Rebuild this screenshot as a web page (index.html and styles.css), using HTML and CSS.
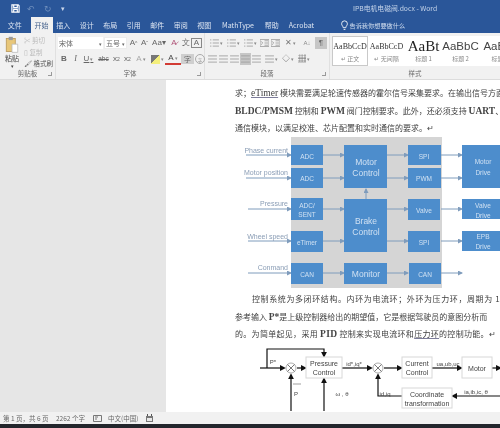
FILE: index.html
```html
<!DOCTYPE html>
<html lang="zh">
<head>
<meta charset="utf-8">
<title>IPB电机电磁阀.docx - Word</title>
<link rel="stylesheet" href="styles.css">
</head>
<body>
<svg class="defs" width="0" height="0">
  <symbol id="lines" viewBox="0 0 10 9"><path d="M0 1h10M0 4.500h10M0 8h10" stroke="currentColor" fill="none"/></symbol>
  <symbol id="list" viewBox="0 0 10 9"><path d="M3 1h7M3 4.500h7M3 8h7M0 1h1.500M0 4.500h1.500M0 8h1.500" stroke="currentColor" fill="none"/></symbol>
  <symbol id="indent" viewBox="0 0 10 9"><path d="M0 .5h10v8H0zM5 2h4M5 4.500h4M5 7h4M1 2.500l2 2-2 2" stroke="currentColor" fill="none"/></symbol>
</svg>
<div class="app">
  <header class="titlebar">
    <div class="quick">
      <svg class="save" viewBox="0 0 10 10"><path d="M1 1h7l1 1v7H1zM3 1v3h4V1M3 9V6h4v3" fill="none" stroke="currentColor" stroke-width="1.300"/></svg>
      <span class="dim">↶</span><span class="dim">↻</span><span class="drop">▾</span>
    </div>
    <div class="doc-title">IPB电机电磁阀.docx - Word</div>
  </header>
  <nav class="tabs">
    <span class="tab">文件</span>
    <span class="tab active">开始</span>
    <span class="tab">插入</span>
    <span class="tab">设计</span>
    <span class="tab">布局</span>
    <span class="tab">引用</span>
    <span class="tab">邮件</span>
    <span class="tab">审阅</span>
    <span class="tab">视图</span>
    <span class="tab wide">MathType</span>
    <span class="tab">帮助</span>
    <span class="tab mid">Acrobat</span>
    <span class="tell">
      <svg class="bulb" viewBox="0 0 8 11"><path d="M2.500 8C2.300 6 .7 5.500.7 3.500a3.300 3.300 0 0 1 6.600 0C7.300 5.500 5.700 6 5.500 8zM3 10h2" fill="none" stroke="currentColor"/></svg>
      告诉我你想要做什么
    </span>
  </nav>
  <section class="ribbon">
    <div class="group clip">
      <div class="group-body clip-body">
        <div class="paste">
          <svg class="paste-icon" viewBox="0 0 16 22"><rect x="1" y="3" width="11" height="16" fill="#e8c77a" stroke="#b9975a"/><rect x="4" y="1" width="5" height="4" fill="#9a9a9a"/><path d="M8 10h7v10H8z" fill="#fff" stroke="#bbb"/></svg>
          <span>粘贴</span><span class="caret">▾</span>
        </div>
        <div class="clip-list">
          <span class="off">✂ 剪切</span>
          <span class="off">▯ 复制</span>
          <span>🖌 格式刷</span>
        </div>
      </div>
      <div class="group-label">剪贴板<i class="launch"></i></div>
    </div>
    <div class="group font">
      <div class="group-body stack">
        <div class="row">
          <span class="select s-font">宋体<b>▾</b></span>
          <span class="select s-size">五号<b>▾</b></span>
          <span class="ic w11">A<sup>^</sup></span>
          <span class="ic w11">A<sup>ˇ</sup></span>
          <span class="ic w18">Aa▾</span>
          <span class="ic w12 rose">A̷</span>
          <span class="ic w11">文</span>
          <span class="ic w11 boxed">A</span>
        </div>
        <div class="row serif">
          <span class="ic w12 bold">B</span>
          <span class="ic w11 ital">I</span>
          <span class="ic w15 under">U<small>▾</small></span>
          <span class="ic w15 strike">abc</span>
          <span class="ic w11">x<sub>2</sub></span>
          <span class="ic w11">x<sup>2</sup></span>
          <span class="ic w16 pale">A<small>▾</small></span>
          <span class="ic w16"><i class="hl"></i><small>▾</small></span>
          <span class="ic w16 red-a">A<small>▾</small></span>
          <span class="ic w13 shade">字</span>
          <span class="ic w11 circ">字</span>
        </div>
      </div>
      <div class="group-label">字体<i class="launch"></i></div>
    </div>
    <div class="group para">
      <div class="group-body stack">
        <div class="row">
          <span class="ic w18"><svg class="glyph"><use href="#list"/></svg><small>▾</small></span>
          <span class="ic w17"><svg class="glyph"><use href="#list"/></svg><small>▾</small></span>
          <span class="ic w17"><svg class="glyph"><use href="#list"/></svg><small>▾</small></span>
          <span class="ic w11"><svg class="glyph"><use href="#indent"/></svg></span>
          <span class="ic w11"><svg class="glyph"><use href="#indent"/></svg></span>
          <span class="ic w18 x">✕<small>▾</small></span>
          <span class="ic w16 sort">A↓</span>
          <span class="ic w12 pilcrow">¶</span>
        </div>
        <div class="row">
          <span class="ic w11"><svg class="glyph"><use href="#lines"/></svg></span>
          <span class="ic w11"><svg class="glyph"><use href="#lines"/></svg></span>
          <span class="ic w11"><svg class="glyph"><use href="#lines"/></svg></span>
          <span class="ic w11 on"><svg class="glyph"><use href="#lines"/></svg></span>
          <span class="ic w11"><svg class="glyph"><use href="#lines"/></svg></span>
          <span class="ic w18"><svg class="glyph"><use href="#lines"/></svg><small>▾</small></span>
          <span class="ic w16">◇<small>▾</small></span>
          <span class="ic w16">▦<small>▾</small></span>
        </div>
      </div>
      <div class="group-label">段落<i class="launch"></i></div>
    </div>
    <div class="group styles">
      <div class="gallery">
        <div class="style current"><span class="sample">AaBbCcD</span><span class="name">↵ 正文</span></div>
        <div class="style"><span class="sample">AaBbCcD</span><span class="name">↵ 无间隔</span></div>
        <div class="style"><span class="sample h1">AaBt</span><span class="name">标题 1</span></div>
        <div class="style"><span class="sample h2">AaBbC</span><span class="name">标题 2</span></div>
        <div class="style"><span class="sample h2">AaBb</span><span class="name">标题</span></div>
      </div>
      <div class="group-label">样式</div>
    </div>
  </section>
  <main class="workspace">
    <aside class="side"></aside>
    <article class="page">
      <p class="line">求；<span class="lat wavy">eTimer</span> 模块需要满足轮速传感器的霍尔信号采集要求。在输出信号方面，</p>
      <p class="line"><span class="lat">BLDC/PMSM</span> 控制和 <span class="lat">PWM</span> 阀门控制要求。此外，还必须支持 <span class="lat">UART</span>、<span class="lat">SPI</span>、<span class="lat">CAN</span></p>
      <p class="line">通信模块，以满足校准、芯片配置和实时通信的要求。↵</p>

      <svg class="fig fig-one" viewBox="166 137 334 153">
        <defs>
          <marker id="tip" markerWidth="6" markerHeight="6" refX="4" refY="2.500" orient="auto"><path d="M0 0l5 2.500-5 2.500z" fill="#7f9cbc"/></marker>
          <marker id="tipk" markerWidth="5" markerHeight="5" refX="3.500" refY="2.500" orient="auto"><path d="M0 0l5 2.500-5 2.500z" fill="#111"/></marker>
        </defs>
        <rect class="back" x="291" y="137" width="151" height="151"/>
        <g class="wires">
          <path d="M246 155H291"/><path d="M246 178H291"/>
          <path d="M322 155H344"/><path d="M322 178H344"/>
          <path d="M387 155H408"/><path d="M387 178H408"/>
          <path d="M441 155H462"/><path d="M441 178H462"/>
          <path d="M248 209H291"/><path d="M248 241H291"/><path d="M248 273H291"/>
          <path d="M322 209H344"/><path d="M322 241H344"/><path d="M322 273H344"/>
          <path d="M387 209H408"/><path d="M387 241H408"/><path d="M387 273H408"/>
          <path d="M441 209H462"/><path d="M441 241H462"/><path d="M441 273H462"/>
          <path d="M366 199V189"/>
        </g>
        <g class="blocks">
          <rect x="291" y="145" width="32" height="20"/><rect x="291" y="168" width="32" height="20"/>
          <rect x="344" y="145" width="43" height="43"/>
          <rect x="408" y="145" width="33" height="20"/><rect x="408" y="168" width="33" height="20"/>
          <rect x="462" y="145" width="42" height="43"/>
          <rect x="291" y="198" width="32" height="22"/><rect x="344" y="199" width="43" height="53"/>
          <rect x="408" y="199" width="32" height="21"/><rect x="462" y="199" width="42" height="20"/>
          <rect x="291" y="231" width="32" height="21"/><rect x="408" y="231" width="32" height="21"/>
          <rect x="462" y="231" width="42" height="20"/>
          <rect x="291" y="263" width="32" height="21"/><rect x="344" y="263" width="43" height="21"/>
          <rect x="409" y="263" width="32" height="21"/>
        </g>
        <g class="inputs">
          <text x="288" y="153">Phase current</text>
          <text x="288" y="175">Motor position</text>
          <text x="288" y="206">Pressure</text>
          <text x="288" y="239">Wheel speed</text>
          <text x="288" y="270">Conmand</text>
        </g>
        <g class="labels">
          <text x="307" y="159">ADC</text><text x="307" y="181">ADC</text>
          <text class="big" x="366" y="165">Motor</text><text class="big" x="366" y="176">Control</text>
          <text x="424" y="159">SPI</text><text x="424" y="181">PWM</text>
          <text x="483" y="164">Motor</text><text x="483" y="175">Drive</text>
          <text x="307" y="208">ADC/</text><text x="307" y="217">SENT</text>
          <text class="big" x="366" y="224">Brake</text><text class="big" x="366" y="235">Control</text>
          <text x="424" y="213">Valve</text>
          <text x="483" y="208">Valve</text><text x="483" y="218">Drive</text>
          <text x="307" y="245">eTimer</text><text x="424" y="245">SPI</text>
          <text x="483" y="239">EPB</text><text x="483" y="249">Drive</text>
          <text x="307" y="277">CAN</text><text class="big" x="366" y="277">Monitor</text><text x="425" y="277">CAN</text>
        </g>
      </svg>

      <p class="line indent">控制系统为多闭环结构。内环为电流环；外环为压力环，周期为 1</p>
      <p class="line">参考输入 <span class="lat">P*</span>是上级控制器给出的期望值，它是根据驾驶员的意图分析而</p>
      <p class="line last">的。为简单起见，采用 <span class="lat">PID</span> 控制来实现电流环和<span class="wavy">压力环</span>的控制功能。↵</p>

      <svg class="fig fig-two" viewBox="166 344 334 68">
        <g class="flow">
          <path d="M260 369H284"/><path d="M267 369V350H324V357"/>
          <path d="M297 369H305"/><path d="M342 369H371"/><path d="M384 369H401"/>
          <path d="M432 369H461"/><path d="M492 369H500"/>
          <path d="M500 397H453"/><path d="M402 397H378V376"/>
          <path d="M291 412V376"/><path d="M324 412V380"/>
          <path class="plain" d="M293 385H301"/>
        </g>
        <g class="boxes">
          <rect x="306" y="358" width="36" height="21"/>
          <rect x="402" y="358" width="30" height="21"/>
          <rect x="462" y="358" width="30" height="21"/>
          <rect x="402" y="389" width="50" height="20"/>
        </g>
        <g class="sum">
          <circle cx="291" cy="369" r="5"/><path d="M287.500 365.500l7 7M294.500 365.500l-7 7"/>
          <circle cx="378" cy="369" r="5"/><path d="M374.500 365.500l7 7M381.500 365.500l-7 7"/>
        </g>
        <g class="cap">
          <text x="324" y="367">Pressure</text><text x="324" y="376">Control</text>
          <text x="417" y="367">Current</text><text x="417" y="376">Control</text>
          <text x="477" y="372">Motor</text>
          <text x="427" y="398">Coordinate</text><text x="427" y="407">transformation</text>
          <text class="small" x="273" y="365">P*</text>
          <text class="small" x="354" y="367">id*,iq*</text>
          <text class="small" x="448" y="367">ua,ub,uc</text>
          <text class="small" x="476" y="395">ia,ib,ic, θ</text>
          <text class="small" x="385" y="397">id,iq</text>
          <text class="small" x="342" y="397">ω , θ</text>
          <text class="small" x="296" y="397">P</text>
        </g>
      </svg>
    </article>
  </main>
  <footer class="status">
    <span class="s1">第 1 页，共 6 页</span>
    <span class="s2">2262 个字</span>
    <svg class="s3" viewBox="0 0 9 7"><path d="M.5.500h8v6h-8zM2 2h3M2 4h2" fill="none" stroke="#777"/></svg>
    <span class="s4">中文(中国)</span>
    <svg class="s5" viewBox="0 0 7 8"><path d="M0 2h7v6H0z" fill="#777"/><path d="M1 0h1v2H1zM5 0h1v2H5z" fill="#555"/><path d="M1 4h5v3H1z" fill="#e8e8e8"/></svg>
  </footer>
  <div class="taskbar"></div>
</div>
</body>
</html>
```

FILE: styles.css
```css
* { box-sizing: border-box; }
html, body { margin: 0; padding: 0; background: #fff; }
body { width: 500px; height: 428px; overflow: hidden; font-family: "Noto Sans CJK SC", "Liberation Sans", sans-serif; }
.defs { display: block; height: 0; }
.app { width: 500px; height: 428px; display: flex; flex-direction: column; overflow: hidden; filter: blur(.45px); }

.titlebar { height: 17px; background: #2a5699; color: #fff; display: flex; align-items: center; position: relative; }
.quick { display: flex; align-items: center; gap: 7px; padding-left: 11px; font-size: 9px; line-height: 1; }
.save { width: 9px; height: 9px; color: #fff; }
.dim { color: #6f8fbd; width: 10px; }
.drop { font-size: 7px; color: #c9d6ea; }
.doc-title { position: absolute; left: 353px; top: 2px; font-size: 6.800px; line-height: 12px; color: #c6d5ea; white-space: nowrap; }

.tabs { height: 16px; background: #2a5699; color: #dbe4f1; display: flex; align-items: stretch; padding-left: 3px; font-size: 7px; }
.tab { width: 23.500px; display: flex; align-items: center; justify-content: center; white-space: nowrap; }
.tab.active { background: #f1f1f1; color: #44618c; margin-left: 4px; margin-right: -1px; width: 22px; }
.tab.wide { width: 44px; }
.tab.mid { width: 36px; }
.tell { display: flex; align-items: center; gap: 2px; margin-left: 21px; color: #cfdcee; font-size: 6.200px; white-space: nowrap; }
.bulb { width: 7px; height: 11px; color: #fff; }

.ribbon { height: 47px; background: #f1f1f1; display: flex; border-bottom: 1px solid #dcdcdc; color: #555; font-size: 7px; }
.group { display: flex; flex-direction: column; border-right: 1px solid #e0e0e0; position: relative; }
.clip { width: 56px; }
.font { width: 149px; }
.para { width: 125px; }
.styles { width: 170px; border-right: 0; }
.group-body { flex: 1; min-height: 0; }
.group-label { height: 11px; font-size: 6.500px; line-height: 10px; text-align: center; color: #666; position: relative; }
.launch { position: absolute; right: 3px; bottom: 3px; width: 4px; height: 4px; border-right: 1px solid #999; border-bottom: 1px solid #999; }

.clip-body { display: flex; }
.paste { width: 24px; display: flex; flex-direction: column; align-items: center; padding-top: 3px; line-height: 9px; color: #444; }
.paste-icon { width: 14px; height: 19px; }
.caret { font-size: 5px; line-height: 5px; }
.clip-list { display: flex; flex-direction: column; gap: 2px; padding-top: 3px; white-space: nowrap; font-size: 6.500px; line-height: 9.500px; }
.off { color: #b9b9b9; }

.stack { display: flex; flex-direction: column; gap: 4px; padding: 4px 0 0 2px; }
.row { height: 12px; display: flex; align-items: center; white-space: nowrap; }
.select { height: 12px; background: #fff; display: flex; align-items: center; justify-content: space-between; padding: 0 1px 0 1px; font-size: 7px; color: #666; }
.select b { font-size: 5px; font-weight: normal; }
.s-font { width: 45px; }
.s-size { width: 23px; margin: 0 1px 0 1px; border: 1px solid #ececec; }
.ic { height: 12px; display: flex; align-items: center; justify-content: center; flex: none; font-size: 8px; color: #666; font-family: "Liberation Sans", sans-serif; line-height: 1; }
.ic small { font-size: 5px; margin-left: 1px; color: #888; }
.ic sup, .ic sub { font-size: 5px; }
.w11 { width: 11px; } .w12 { width: 12px; } .w13 { width: 13px; } .w15 { width: 15px; }
.w16 { width: 16px; } .w17 { width: 17px; } .w18 { width: 18px; }
.bold { font-weight: bold; }
.ital { font-style: italic; font-family: "Liberation Serif", serif; }
.under { text-decoration: underline; }
.strike { font-size: 6.500px; text-decoration: line-through; }
.rose { color: #b0567a; }
.boxed { border: 1px solid #888; height: 10px; }
.pale { color: #a9a9a9; }
.red-a { color: #444; border-bottom: 2px solid #d23b34; height: 12px; }
.shade { background: #cfcfcf; height: 10px; font-size: 7px; font-family: "Noto Sans CJK SC", sans-serif; }
.circ { border: 1px solid #aaa; border-radius: 50%; height: 10px; width: 10px; font-size: 5px; margin-left: 1px; color: #999; font-family: "Noto Sans CJK SC", sans-serif; }
.hl { width: 9px; height: 9px; display: block; background: linear-gradient(135deg, #777 0 45%, #f4ef7c 45%); }
.glyph { width: 9px; height: 8px; color: #a0a0a0; }
.on { background: #c6c6c6; }
.x { color: #777; }
.sort { font-size: 6px; color: #888; }
.pilcrow { background: #c6c6c6; color: #666; }

.gallery { flex: 1; min-height: 0; margin: 3px 0 2px 2px; background: #fff; display: flex; overflow: hidden; }
.style { width: 37px; flex: none; display: flex; flex-direction: column; align-items: center; padding-top: 3px; white-space: nowrap; }
.style.current { border: 1px solid #c9c9c9; width: 36px; padding-top: 2px; }
.sample { height: 15px; line-height: 15px; font-family: "Liberation Serif", serif; font-size: 8px; color: #333; }
.sample.h1 { font-size: 15px; color: #222; }
.sample.h2 { font-size: 11.500px; font-family: "Liberation Sans", sans-serif; color: #444; font-weight: normal; }
.name { font-size: 6px; line-height: 10px; color: #888; }

.workspace { height: 332px; display: flex; background: #e6e6e6; overflow: hidden; }
.side { width: 166px; flex: none; background: #e6e6e6; }
.page { flex: 1; min-width: 0; background: #fff; padding-top: 4px; overflow: hidden; }
.line { margin: 0; padding-left: 69px; height: 17.700px; line-height: 17.700px; font-family: "Noto Sans CJK SC", serif; font-size: 8px; color: #3f3f3f; white-space: nowrap; overflow: hidden; }
.lat { font-family: "Liberation Serif", serif; font-size: 9.500px; font-weight: bold; color: #444; }
.wavy.lat { font-weight: normal; }
.indent { padding-left: 86px; letter-spacing: .6px; }
.last { letter-spacing: .3px; }
.wavy { text-decoration: underline; text-decoration-color: #7d7d9a; }
.fig { display: block; width: 334px; }
.fig-one { height: 153px; }
.fig-two { height: 68px; }

.back { fill: #d5d5d5; }
.wires path { stroke: #7f9cbc; stroke-width: 1; fill: none; marker-end: url(#tip); }
.blocks rect { fill: #4d8dcc; }
.inputs text { font-family: "Liberation Sans", sans-serif; font-size: 7px; fill: #8a9db5; text-anchor: end; }
.labels text { font-family: "Liberation Sans", sans-serif; font-size: 6.500px; fill: #cfe0f2; text-anchor: middle; }
.labels .big { font-size: 8.500px; }
.flow path { stroke: #111; stroke-width: 1.200; fill: none; marker-end: url(#tipk); }
.flow .plain { stroke: #777; stroke-width: .7; marker-end: none; }
.boxes rect { fill: #fff; stroke: #d8d8d8; }
.sum circle { fill: #fff; stroke: #777; stroke-width: .6; }
.sum path { stroke: #555; stroke-width: .8; fill: none; }
.cap text { font-family: "Liberation Sans", sans-serif; font-size: 7px; fill: #444; text-anchor: middle; }
.cap .small { font-size: 6px; }

.status { height: 12px; background: #f1f1f1; display: flex; align-items: center; font-size: 6.500px; color: #666; white-space: nowrap; flex: none; }
.s1 { margin-left: 3px; width: 53px; }
.s2 { width: 37px; }
.s3 { width: 9px; height: 7px; }
.s4 { margin-left: 6px; width: 38px; }
.s5 { width: 7px; height: 8px; }
.taskbar { height: 4px; background: #23262c; flex: none; }
```
